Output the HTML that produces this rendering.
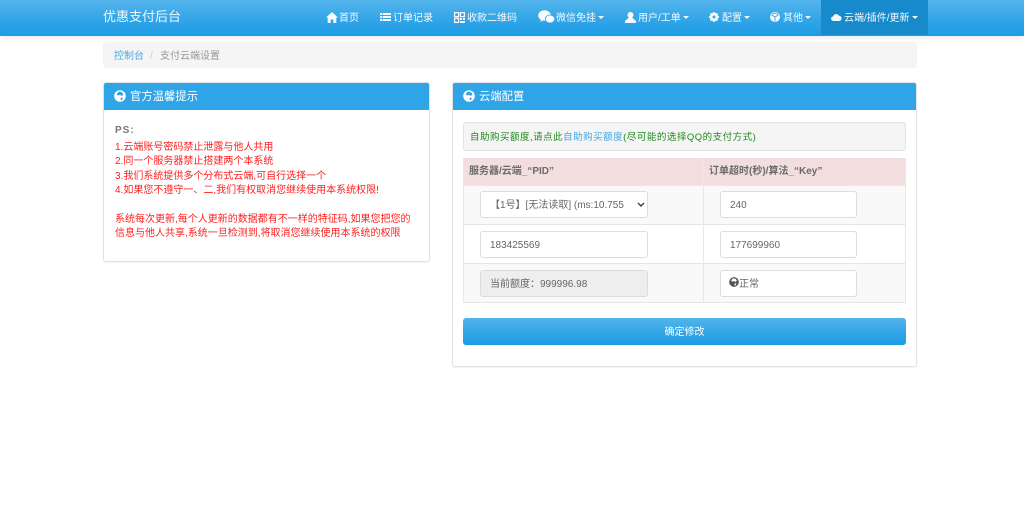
<!DOCTYPE html>
<html lang="zh">
<head>
<meta charset="utf-8">
<title>支付云端设置</title>
<style>
html,body{margin:0;padding:0;background:#fff}
body{width:1024px;height:531px;overflow:hidden;position:relative;font-family:"Liberation Sans","Noto Sans CJK SC",sans-serif;font-size:10px;color:#666}
#w{position:absolute;left:0;top:0;width:1024px;height:531px;filter:blur(.35px)}
.a{position:absolute;white-space:nowrap}
#nav{left:0;top:0;width:1024px;height:36px;background:linear-gradient(#54b4eb,#2fa4e7 60%,#1d9ce5);box-shadow:0 1px 6px rgba(0,0,0,.12)}
.n{position:absolute;top:0;height:36px;line-height:37px;color:#fff;white-space:nowrap;font-size:10px;opacity:.95}
.n svg{position:absolute;top:12px;left:0}
.c{display:inline-block;width:0;height:0;border-left:3px solid transparent;border-right:3px solid transparent;border-top:3px solid #fff;vertical-align:middle;margin-left:2px;position:relative;top:-1px}
#bc{left:103px;top:42px;width:814px;height:26px;background:#f5f5f5;border-radius:3px;line-height:29px;color:#999}
.panel{background:#fff;border:1px solid #dfe3e6;border-radius:3px;box-sizing:border-box;box-shadow:0 1px 1px rgba(0,0,0,.05)}
.ph{position:absolute;left:0;top:0;right:0;height:27px;background:#2fa4e7;border-radius:2px 2px 0 0;color:#fff;font-size:11.35px;line-height:29px}
.ph svg{position:absolute;left:10px;top:7px}
.ph span{position:absolute;left:26px}
.r{color:#ff2020;line-height:14.35px;font-size:10px}
.inp{position:absolute;box-sizing:border-box;height:27px;background:#fff;border:1px solid #ddd;border-radius:3px;line-height:27px;color:#666;padding-left:9px;font-size:10px;white-space:nowrap}
</style>
</head>
<body>
<div id="w">
<div id="nav" class="a"></div>
<div class="a" style="left:103px;top:0;line-height:33px;font-size:13px;color:#eef7fd">优惠支付后台</div>

<div class="a" style="left:821px;top:0;width:107px;height:35px;background:#178acc"></div>

<div class="n" style="left:326px;padding-left:13px"><svg width="12" height="11" viewBox="0 0 12 11"><path fill="#fff" d="M6 0L0 5.5h1.7V11h3V7.5h2.6V11h3V5.500H12z"/></svg>首页</div>
<div class="n" style="left:380px;padding-left:13px"><svg width="11" height="11" viewBox="0 0 11 11"><path fill="#fff" d="M0 1h11v2H0zM0 4h11v2H0zM0 7h11v2H0z"/><path stroke="#2fa4e7" stroke-width=".6" d="M2.500 1v8"/></svg>订单记录</div>
<div class="n" style="left:454px;padding-left:13px"><svg width="11" height="11" viewBox="0 0 11 11"><path fill="none" stroke="#fff" stroke-width="1.2" d="M.6.6h4v4h-4zM6.400.6h4v4h-4zM.6 6.400h4v4h-4z"/><path fill="#fff" d="M6 6h2v2H6zM9 6h2v2H9zM6 9h5v2H6z"/></svg>收款二维码</div>
<div class="n" style="left:538px;padding-left:18px"><svg width="17" height="14" viewBox="0 0 17 14" style="top:10px"><ellipse cx="6.500" cy="5.500" rx="6.300" ry="5.200" fill="#fff"/><path fill="#fff" d="M3 9l-.5 3 3-2z"/><ellipse cx="12" cy="9" rx="4.800" ry="4" fill="#fff" stroke="#2fa4e7" stroke-width=".7"/></svg>微信免挂<i class="c"></i></div>
<div class="n" style="left:625px;padding-left:13px"><svg width="11" height="11" viewBox="0 0 11 11"><circle cx="5.500" cy="3" r="3" fill="#fff"/><path fill="#fff" d="M4 5.500h3L11 9v2H0V9z"/></svg>用户/工单<i class="c"></i></div>
<div class="n" style="left:709px;padding-left:13px"><svg width="10" height="10" viewBox="0 0 10 10"><circle cx="5" cy="5" r="3.200" fill="none" stroke="#fff" stroke-width="2"/><path stroke="#fff" stroke-width="1.800" d="M5 0v10M0 5h10M1.500 1.500l7 7M8.500 1.500l-7 7"/><circle cx="5" cy="5" r="1.500" fill="#3aa9e8"/></svg>配置<i class="c"></i></div>
<div class="n" style="left:770px;padding-left:13px"><svg width="10" height="10" viewBox="0 0 10 10"><circle cx="5" cy="5" r="5" fill="#fff"/><path fill="none" stroke="#3aa9e8" stroke-width=".9" d="M1.500 3L5 5l3.500-2M5 5v4.500M2 2.500L5 1l3 1.500"/></svg>其他<i class="c"></i></div>
<div class="n" style="left:831px;padding-left:13px"><svg width="11" height="8" viewBox="0 0 11 8" style="top:13px"><path fill="#fff" d="M2.500 8a2.300 2.300 0 0 1-.3-4.600A3.200 3.200 0 0 1 8 2.700 2.700 2.700 0 0 1 8.500 8z"/></svg>云端/插件/更新<i class="c"></i></div>

<div id="bc" class="a"><span style="position:absolute;left:11px;color:#4aa9e5">控制台</span><span style="position:absolute;left:47px;color:#ccc">/</span><span style="position:absolute;left:57px;color:#999">支付云端设置</span></div>

<!-- Left panel -->
<div class="a panel" style="left:103px;top:82px;width:327px;height:180px">
  <div class="ph"><svg width="12" height="12" viewBox="0 0 12 12"><circle cx="6" cy="6" r="5.800" fill="#fff"/><path fill="#2fa4e7" d="M5 1.500l2.500.5 2 2-1.500 2-2-1-2 .5L2.500 4zM7 7.500l2 .5-1.500 2.500-1-1z"/></svg><span>官方温馨提示</span></div>
  <div class="a" style="left:11px;top:42px;font-weight:bold;color:#777;letter-spacing:1px">PS:</div>
  <div class="a r" style="left:11px;top:58px">1.云端账号密码禁止泄露与他人共用<br>2.同一个服务器禁止搭建两个本系统<br>3.我们系统提供多个分布式云端,可自行选择一个<br>4.如果您不遵守一、二,我们有权取消您继续使用本系统权限!<br><br>系统每次更新,每个人更新的数据都有不一样的特征码,如果您把您的<br>信息与他人共享,系统一旦检测到,将取消您继续使用本系统的权限</div>
</div>

<!-- Right panel -->
<div class="a panel" style="left:452px;top:82px;width:465px;height:285px">
  <div class="ph"><svg width="12" height="12" viewBox="0 0 12 12"><circle cx="6" cy="6" r="5.800" fill="#fff"/><path fill="#2fa4e7" d="M5 1.500l2.500.5 2 2-1.500 2-2-1-2 .5L2.500 4zM7 7.500l2 .5-1.500 2.500-1-1z"/></svg><span>云端配置</span></div>
</div>

<div class="a" style="left:463px;top:122px;width:443px;height:29px;box-sizing:border-box;background:#f5f5f5;border:1px solid #e3e3e3;border-radius:3px;line-height:29px;padding-left:6px;color:#1d8a1d;letter-spacing:.5px;font-size:9.500px">自助购买额度,请点此<span style="color:#3fa5e4">自助购买额度</span>(尽可能的选择QQ的支付方式)</div>

<!-- Table -->
<div class="a" style="left:463px;top:158px;width:443px;height:28px;background:#f2dede;border-bottom:1px solid #e8e8e8;box-sizing:border-box"></div>
<div class="a" style="left:463px;top:186px;width:443px;height:39px;background:#f9f9f9;border-bottom:1px solid #e5e5e5;box-sizing:border-box"></div>
<div class="a" style="left:463px;top:225px;width:443px;height:39px;background:#fff;border-bottom:1px solid #e5e5e5;box-sizing:border-box"></div>
<div class="a" style="left:463px;top:264px;width:443px;height:39px;background:#f9f9f9;border-bottom:1px solid #e5e5e5;box-sizing:border-box"></div>
<div class="a" style="left:463px;top:158px;width:1px;height:145px;background:#e8e8e8"></div>
<div class="a" style="left:703px;top:158px;width:1px;height:145px;background:#e8e8e8"></div>
<div class="a" style="left:905px;top:158px;width:1px;height:145px;background:#e8e8e8"></div>

<div class="a" style="left:469px;top:158px;line-height:27px;font-weight:bold;color:#6b6b6b">服务器/云端_“PID”</div>
<div class="a" style="left:709px;top:158px;line-height:27px;font-weight:bold;color:#6b6b6b">订单超时(秒)/算法_“Key”</div>

<div class="inp" style="left:480px;top:191px;width:168px;padding-left:0;color:#666"><span style="position:absolute;left:9px;top:0">【1号】[无法读取] (ms:10.755</span><svg style="position:absolute;left:156px;top:10px" width="8" height="6" viewBox="0 0 8 6"><path fill="none" stroke="#444" stroke-width="1.500" d="M1 1l3 3 3-3"/></svg></div>
<div class="inp" style="left:720px;top:191px;width:137px">240</div>
<div class="inp" style="left:480px;top:231px;width:168px">183425569</div>
<div class="inp" style="left:720px;top:231px;width:137px">177699960</div>
<div class="inp" style="left:480px;top:270px;width:168px;background:#eee">当前额度：999996.98</div>
<div class="inp" style="left:720px;top:270px;width:137px"><svg style="position:absolute;left:8px;top:6px" width="10" height="10" viewBox="0 0 12 12"><circle cx="6" cy="6" r="5.800" fill="#555"/><path fill="#fff" d="M5 1.500l2.500.5 2 2-1.500 2-2-1-2 .5L2.500 4zM7 7.500l2 .5-1.500 2.500-1-1z"/></svg><span style="position:absolute;left:18px;top:0;color:#666">正常</span></div>

<div class="a" style="left:463px;top:318px;width:443px;height:27px;border-radius:3px;background:linear-gradient(#54b4eb,#2fa4e7 60%,#1d9ce5);color:#fff;text-align:center;line-height:29px;font-size:10px">确定修改</div>
</div>
</body>
</html>
